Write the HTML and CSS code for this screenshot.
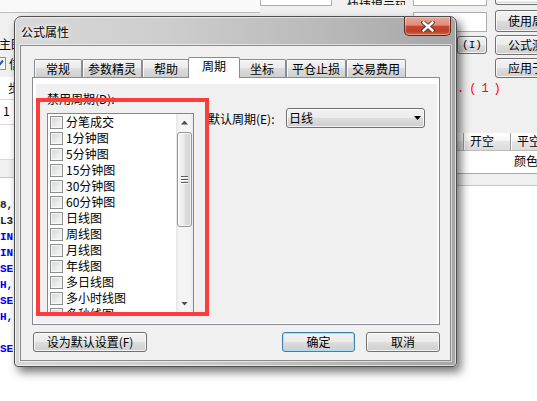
FILE: index.html
```html
<!DOCTYPE html>
<html>
<head>
<meta charset="utf-8">
<link rel="stylesheet" href="styles.css">
</head>
<body>
<div class="app">
  <div class="lc">
    <div class="lc-top"></div>
    <div class="lc-form">
      <div class="lc-label">主图</div>
      <div class="lc-check">
        <span class="cb-on"><svg width="11" height="11" viewBox="0 0 11 11"><path d="M2 5.5 L4.5 8 L9 2.5" fill="none" stroke="#2a55b8" stroke-width="2"/></svg></span>
        <span>信</span>
      </div>
    </div>
    <div class="lc-head">步</div>
    <div class="lc-row">1</div>
    <div class="lc-row tall"></div>
    <div class="lc-band"></div>
    <div class="lc-code">
      <div class="k">8,1</div>
      <div class="k">L3,</div>
      <div class="b">IN</div>
      <div class="b">IN</div>
      <div class="b">SE,</div>
      <div class="b">H,I</div>
      <div class="b">SE,</div>
      <div class="b">H,I</div>
      <div>&nbsp;</div>
      <div class="b">SE,</div>
    </div>
  </div>

  <div class="mc">
    <div class="mc-top">
      <div class="mc-strip"></div>
      <div class="mc-field"></div>
      <div class="mc-text">快捷提示码</div>
    </div>
    <div class="mc-body"></div>
  </div>

  <div class="rc">
    <div class="rc-r1">
      <div class="field f-cut"></div>
      <div class="btn b-cut"></div>
    </div>
    <div class="rc-r2">
      <div class="field f-main"></div>
      <div class="btn rbtn tallbtn">使用局部</div>
    </div>
    <div class="rc-r3">
      <div class="btn ibtn">(I)</div>
      <div class="btn rbtn">公式测试</div>
    </div>
    <div class="rc-r4">
      <div class="btn rbtn lone">应用于图</div>
    </div>
    <div class="rc-red">.(1)</div>
    <div class="rc-head">
      <div class="hc c0"></div>
      <div class="hc c1">开空</div>
      <div class="hc c2">平空</div>
    </div>
    <div class="rc-data">
      <div class="dc c0"></div>
      <div class="dc c1"></div>
      <div class="dc c2">颜色</div>
    </div>
    <div class="rc-band"></div>
    <div class="rc-fill"></div>
  </div>
</div>

<div class="dlg">
  <div class="titlebar">
    <div class="title">公式属性</div>
    <div class="close">
      <svg width="14" height="11" viewBox="0 0 14 11">
        <path d="M2.5 1.5 L11.5 9.5 M11.5 1.5 L2.5 9.5" stroke="#3b3b3b" stroke-width="4.6" stroke-linecap="square" fill="none" opacity="0.75"/>
        <path d="M2.5 1.5 L11.5 9.5 M11.5 1.5 L2.5 9.5" stroke="#ffffff" stroke-width="2.4" stroke-linecap="square" fill="none"/>
      </svg>
    </div>
  </div>
  <div class="client">
    <div class="tabs">
      <div class="tab">常规</div>
      <div class="tab">参数精灵</div>
      <div class="tab">帮助</div>
      <div class="tab sel">周期</div>
      <div class="tab">坐标</div>
      <div class="tab">平仓止损</div>
      <div class="tab">交易费用</div>
    </div>
    <div class="panel">
      <div class="page">
        <div class="pleft">
          <div class="lbl">禁用周期(D):</div>
          <div class="listbox">
            <div class="items">
              <div class="item"><span class="cb"></span>分笔成交</div>
              <div class="item"><span class="cb"></span>1分钟图</div>
              <div class="item"><span class="cb"></span>5分钟图</div>
              <div class="item"><span class="cb"></span>15分钟图</div>
              <div class="item"><span class="cb"></span>30分钟图</div>
              <div class="item"><span class="cb"></span>60分钟图</div>
              <div class="item"><span class="cb"></span>日线图</div>
              <div class="item"><span class="cb"></span>周线图</div>
              <div class="item"><span class="cb"></span>月线图</div>
              <div class="item"><span class="cb"></span>年线图</div>
              <div class="item"><span class="cb"></span>多日线图</div>
              <div class="item"><span class="cb"></span>多小时线图</div>
              <div class="item"><span class="cb"></span>多秒线图</div>
            </div>
            <div class="vscroll">
              <div class="sb-btn"><span class="arr up"></span></div>
              <div class="thumb"><span class="grip"></span></div>
              <div class="track"></div>
              <div class="sb-btn"><span class="arr down"></span></div>
            </div>
          </div>
        </div>
        <div class="pright">
          <span class="lbl2">默认周期(E):</span>
          <div class="combo"><span class="ctext">日线</span><span class="arr down black"></span></div>
        </div>
      </div>
    </div>
    <div class="btnrow">
      <div class="btn dbtn b-def">设为默认设置(F)</div>
      <div class="btn dbtn b-ok">确定</div>
      <div class="btn dbtn b-cancel">取消</div>
    </div>
  </div>
</div>

<div class="annot"></div>
</body>
</html>
```

FILE: styles.css
```css
* { box-sizing: border-box; }
html, body { margin: 0; padding: 0; }
body {
  width: 537px;
  height: 401px;
  overflow: hidden;
  position: relative;
  background: #fff;
  font-family: "Noto Sans CJK SC", "Noto Sans", sans-serif;
  font-size: 12px;
  color: #000;
}

/* ---------- background application ---------- */
.app { display: flex; width: 537px; height: 401px; overflow: hidden; }

.lc {
  width: 14px;
  flex: none;
  overflow: hidden;
  white-space: nowrap;
  display: flex;
  flex-direction: column;
}
.lc-top { height: 13px; background: #f9f9f9; border-bottom: 1px solid #bdbdbd; flex: none; }
.lc-form { height: 64px; background: #f0f0f0; padding-top: 23px; flex: none; }
.lc-label { height: 16px; line-height: 16px; margin-left: -1px; }
.lc-check { display: flex; align-items: center; gap: 3px; margin-top: 4px; margin-left: -7px; height: 14px; }
.cb-on {
  width: 13px; height: 13px; flex: none;
  border: 1px solid #8e8f8f;
  background: linear-gradient(135deg, #e8eaec, #fbfbfb);
  display: flex; align-items: center; justify-content: center;
}
.lc-head { height: 23px; background: #fff; border-bottom: 1px solid #d9d9d9; padding: 2px 0 0 8px; line-height: 18px; flex: none; }
.lc-row { height: 25px; background: #fff; border-bottom: 1px solid #d9d9d9; padding-left: 3px; line-height: 22px; flex: none; }
.lc-row.tall { height: 35px; }
.lc-band { height: 18px; background: #f0f0f0; border-bottom: 1px solid #c8c8c8; flex: none; }
.lc-code {
  padding-top: 19px;
  font-family: "Liberation Mono", monospace;
  font-size: 11px;
  font-weight: bold;
  line-height: 16px;
}
.lc-code .k { color: #222; }
.lc-code .b { color: #0000ee; }

.mc { flex: 1; min-width: 0; display: flex; flex-direction: column; }
.mc-top { height: 16px; display: flex; align-items: flex-start; background: #f0f0f0; flex: none; overflow: hidden; }
.mc-strip { width: 246px; flex: none; height: 13px; background: #f9f9f9; border-bottom: 1px solid #bdbdbd; }
.mc-field { width: 72px; flex: none; height: 6px; background: #fff; border: 1px solid #abadb3; border-top: none; }
.mc-text { flex: 1; min-width: 0; height: 5px; overflow: hidden; padding-left: 15px; line-height: 12px; white-space: nowrap; }
.mc-body { flex: 1; background: #fff; }

.rc { width: 132px; flex: none; display: flex; flex-direction: column; background: #f0f0f0; }
.field { flex: none; background: #fff; border: 1px solid #abadb3; }
.btn {
  flex: none;
  border: 1px solid #707070;
  border-radius: 3px;
  background: linear-gradient(#f2f2f2 0%, #ebebeb 50%, #dddddd 50%, #cfcfcf 100%);
  box-shadow: inset 0 0 0 1px rgba(255,255,255,0.75);
  white-space: nowrap;
}
.rc-r1 { height: 10px; display: flex; align-items: flex-start; flex: none; }
.f-cut { margin-left: 8px; width: 74px; height: 6px; border-top: none; }
.b-cut { margin-left: 8px; width: 60px; height: 5px; border-top: none; border-radius: 0 0 3px 3px; }
.rc-r2 { height: 25px; display: flex; align-items: flex-start; flex: none; }
.f-main { margin-left: 8px; margin-top: 2px; width: 74px; height: 20px; }
.rbtn { margin-left: 8px; width: 70px; height: 20px; line-height: 18px; padding-left: 12px; }
.tallbtn { height: 22px; line-height: 20px; }
.rc-r3 { height: 23px; display: flex; align-items: flex-start; flex: none; }
.ibtn { margin-left: 52px; margin-top: 1px; width: 30px; height: 18px; line-height: 16px; text-align: center; font-family: "Liberation Mono", monospace; font-size: 11px; }
.rc-r4 { height: 25px; display: flex; align-items: flex-start; flex: none; }
.lone { margin-left: 90px; }
.rc-red {
  height: 12px; line-height: 12px; margin-left: 52px; color: #ff0000; flex: none;
  font-family: "Liberation Mono", monospace; font-size: 12px; letter-spacing: 5px; white-space: nowrap;
}
.rc-head { margin-top: 38px; height: 18px; display: flex; flex: none; }
.hc {
  flex: none;
  height: 18px; line-height: 16px;
  background: linear-gradient(#ffffff 0%, #f4f4f4 50%, #e6e6e6 50%, #dcdcdc 100%);
  border-left: 1px solid #9c9c9c;
  border-bottom: 1px solid #bcbcbc;
  box-shadow: inset 1px 0 0 #fff;
  padding-left: 6px;
  white-space: nowrap;
}
.c0 { width: 58px; border-left: none; }
.c1 { width: 47px; }
.c2 { width: 60px; }
.rc-data { height: 23px; display: flex; background: #fff; border-bottom: 1px solid #a8a8a8; flex: none; }
.dc { flex: none; height: 22px; line-height: 20px; padding-left: 4px; white-space: nowrap; }
.rc-band { height: 12px; background: #f0f0f0; border-bottom: 1px solid #c4c4c4; flex: none; }
.rc-fill { flex: 1; background: #fff; }

/* ---------- dialog ---------- */
.dlg {
  position: absolute;
  left: 14px;
  top: 16px;
  width: 443px;
  height: 351px;
  border: 1px solid #4f4f4f;
  border-radius: 7px 7px 4px 4px;
  background: linear-gradient(to right, #d8d8d8 0%, #cdcdcd 35%, #b9b9b9 70%, #a6a6a6 100%);
  box-shadow: inset 0 0 0 1px rgba(255,255,255,0.6), 4px 5px 10px rgba(0,0,0,0.55);
  display: flex;
  flex-direction: column;
  padding: 0 5px 5px 5px;
  z-index: 5;
}
.titlebar { height: 28px; flex: none; display: flex; justify-content: space-between; align-items: flex-start; }
.title { padding: 8px 0 0 1px; line-height: 14px; text-shadow: 0 0 6px #fff, 0 0 3px #fff; }
.close {
  width: 47px;
  height: 19px;
  border: 1px solid #5e2a20;
  border-top: none;
  border-radius: 0 0 5px 5px;
  background: linear-gradient(#e9a797 0%, #df8c7b 45%, #c9472f 52%, #c13f28 80%, #d46a47 100%);
  box-shadow: inset 0 0 0 1px rgba(255,255,255,0.35);
  display: flex;
  align-items: center;
  justify-content: center;
}
.client {
  flex: 1;
  background: #f0f0f0;
  border: 1px solid #8c8c8c;
  box-shadow: 0 0 0 1px rgba(255,255,255,0.55);
  display: flex;
  flex-direction: column;
  padding: 11px 10px 0 11px;
}

.tabs { display: flex; align-items: flex-end; height: 20px; padding-left: 2px; flex: none; position: relative; z-index: 1; }
.tab {
  height: 18px;
  min-width: 48px;
  padding: 1px 5px 0;
  border: 1px solid #898c95;
  border-bottom: none;
  border-radius: 2px 2px 0 0;
  background: linear-gradient(#f2f2f2 0%, #ebebeb 50%, #dddddd 50%, #cfcfcf 100%);
  box-shadow: inset 1px 1px 0 rgba(255,255,255,0.8);
  text-align: center;
  line-height: 16px;
  white-space: nowrap;
}
.tab.sel {
  height: 21px;
  min-width: 52px;
  margin: 0 -2px -1px;
  padding: 0 7px;
  background: #fff;
  box-shadow: none;
  position: relative;
  z-index: 2;
}

.panel {
  height: 248px;
  flex: none;
  border: 1px solid #898c95;
  background: #fff;
  padding: 6px 2px 1px 3px;
}
.page { height: 100%; background: #f0f0f0; display: flex; padding: 7px 0 0 11px; }
.pleft { width: 147px; flex: none; }
.lbl { height: 16px; line-height: 16px; margin-bottom: 6px; white-space: nowrap; }
.listbox {
  width: 147px;
  height: 200px;
  border: 1px solid #828790;
  background: #fff;
  display: flex;
  overflow: hidden;
}
.items { flex: 1; overflow: hidden; }
.item { height: 16px; line-height: 16px; display: flex; align-items: center; padding-left: 2px; white-space: nowrap; }
.cb {
  width: 13px; height: 13px; flex: none;
  margin-right: 3px;
  border: 1px solid #8e8f8f;
  background: linear-gradient(135deg, #cfd1d4 0%, #ececec 60%, #f8f8f8 100%);
  box-shadow: inset 0 0 0 1px #f6f6f6;
}
.vscroll {
  width: 17px; flex: none;
  display: flex; flex-direction: column;
  background: linear-gradient(to right, #e6e6e6, #f4f4f4 20%, #f4f4f4 80%, #eaeaea);
}
.sb-btn { height: 17px; flex: none; display: flex; align-items: center; justify-content: center; }
.arr { display: block; width: 7px; height: 4px; background: #4e4e4e; }
.arr.up { clip-path: polygon(50% 0, 100% 100%, 0 100%); }
.arr.down { clip-path: polygon(0 0, 100% 0, 50% 100%); }
.arr.black { background: #000; }
.thumb {
  height: 95px; flex: none;
  margin: 1px 1px 0 1px;
  border: 1px solid #979797;
  border-radius: 3px;
  background: linear-gradient(to right, #f6f6f6 0%, #ececec 45%, #dedede 55%, #d2d2d2 100%);
  box-shadow: inset 0 0 0 1px rgba(255,255,255,0.7);
  display: flex; align-items: center; justify-content: center;
}
.grip {
  width: 7px; height: 8px;
  background: repeating-linear-gradient(to bottom, #5a5a5a 0 1px, #ffffff 1px 2px, transparent 2px 3px);
}
.track { flex: 1; }

.pright { display: flex; align-items: center; height: 20px; margin: 17px 0 0 14px; }
.lbl2 { width: 78px; white-space: nowrap; }
.combo {
  width: 139px; height: 20px;
  border: 1px solid #707070;
  border-radius: 3px;
  background: linear-gradient(#f2f2f2 0%, #ebebeb 50%, #dddddd 50%, #cfcfcf 100%);
  box-shadow: inset 0 0 0 1px rgba(255,255,255,0.75);
  display: flex; align-items: center; justify-content: space-between;
  padding: 0 3px 0 2px;
}
.ctext { line-height: 16px; }

.btnrow { display: flex; margin-top: 7px; padding-left: 1px; flex: none; }
.dbtn { height: 20px; line-height: 18px; text-align: center; }
.b-def { width: 114px; }
.b-ok {
  width: 73px; margin-left: auto;
  border-color: #3c7fb1;
  box-shadow: inset 0 0 0 1px #a9def6;
}
.b-cancel { width: 74px; margin-left: 11px; }

/* annotation frame drawn over the screenshot */
.annot {
  position: absolute;
  left: 36px;
  top: 98px;
  width: 173px;
  height: 218px;
  border: 4px solid #ff3b3b;
  z-index: 10;
}
```
